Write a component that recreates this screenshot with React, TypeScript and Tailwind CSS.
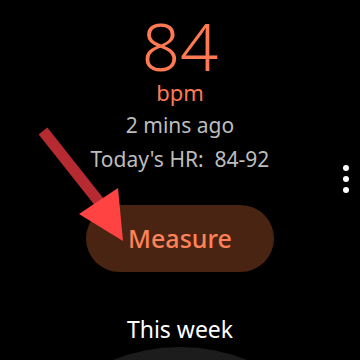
import React from 'react';

// Arrow annotation drawn over the watch face
const PointerArrow = () => (
    <svg className="absolute left-0 top-0" width="360" height="360" viewBox="0 0 360 360" aria-hidden="true">
        <line x1="43" y1="131" x2="104" y2="208" stroke="#b52b31" strokeWidth="11" />
        <polygon points="79,214 118,188 123,241" fill="#ff4242" />
    </svg>
);

const MoreDots = () => (
    <div className="absolute right-[11px] top-[165px] flex flex-col gap-[5px]">
        <span className="h-[6px] w-[6px] rounded-full bg-white" />
        <span className="h-[6px] w-[6px] rounded-full bg-white" />
        <span className="h-[6px] w-[6px] rounded-full bg-white" />
    </div>
);

export default function App() {
    return (
        <div
            className="relative h-[360px] w-[360px] overflow-hidden bg-black text-center"
            style={{ fontFamily: '"Noto Sans", "Open Sans", sans-serif' }}
        >
            <div className="flex flex-col items-center">
                <div className="mt-[11px] text-[67px] font-light leading-[68px] text-[#ff7a52]">84</div>
                <div className="text-[22px] leading-[26px] text-[#ff7a52]">bpm</div>
                <div className="mt-[5px] text-[21px] leading-[30px] text-[#bdbdbd]">2 mins ago</div>
                <div className="mt-[4px] text-[21px] leading-[30px] text-[#bdbdbd] whitespace-pre">Today's HR:  84-92</div>
                <button
                    type="button"
                    className="mt-[31px] flex h-[67px] w-[188px] items-center justify-center rounded-full bg-[#4a2412] text-[25px] font-medium text-[#ff8258]"
                >
                    Measure
                </button>
                <div className="mt-[42px] text-[23px] leading-[30px] text-white">This week</div>
            </div>
            <div className="absolute left-[1px] top-[347px] h-[358px] w-[358px] rounded-full bg-[#1c1c1c]" />
            <MoreDots />
            <PointerArrow />
        </div>
    );
}
